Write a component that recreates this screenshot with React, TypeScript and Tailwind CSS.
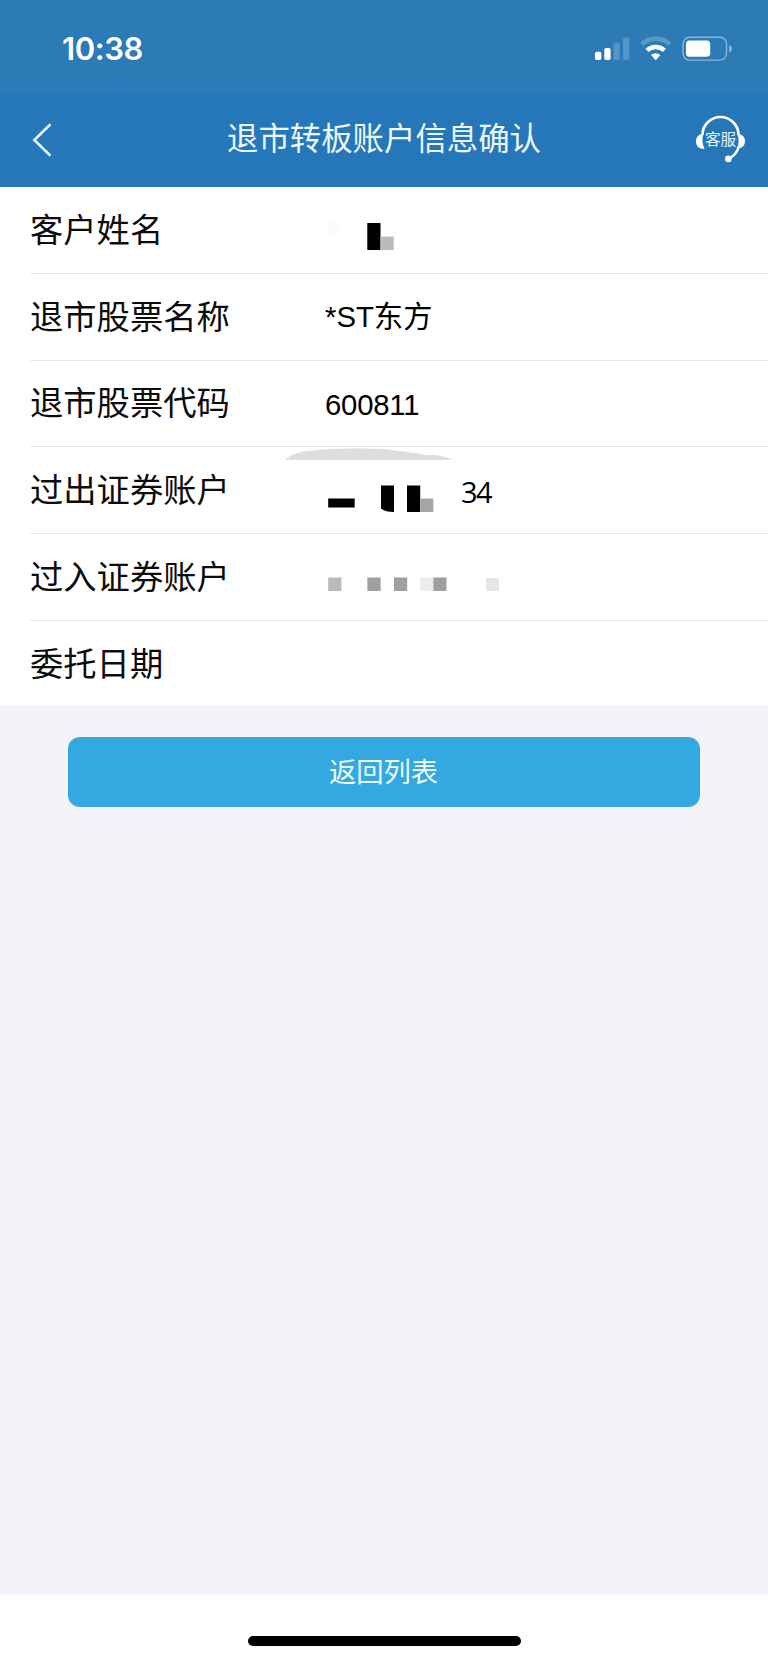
import type { ReactNode } from "react";

function StatusBar() {
  return (
    <div className="flex h-[93px] items-start justify-between bg-[#2c7bb7] pt-[31px] pr-[32px] pl-[62px] text-white">
      <span className="font-['Inter',sans-serif] text-[31px] leading-[36px] font-semibold tracking-[-0.4px]">
        10:38
      </span>
      <svg className="mt-px" width="146" height="32" viewBox="590 32 146 32" fill="white">
        {/* signal */}
        <rect x="595" y="51.7" width="6.3" height="8.3" rx="1.8" />
        <rect x="604.3" y="48" width="6.3" height="12" rx="1.8" />
        <rect x="613.6" y="43" width="6.2" height="17" rx="1.8" opacity="0.2" />
        <rect x="623" y="37.4" width="6.2" height="22.6" rx="1.8" opacity="0.2" />
        {/* wifi */}
        <path d="M641.7 44.2a20.3 20.3 0 0 1 28 0" fill="none" stroke="white" strokeWidth="4.6" opacity="0.22" />
        <path d="M647 50.4a12.7 12.7 0 0 1 17.4 0" fill="none" stroke="white" strokeWidth="4.4" />
        <path d="M651 54.9a7.2 7.2 0 0 1 9.4 0l-4.1 4.8q-.6.6-1.2 0z" />
        {/* battery */}
        <rect x="683.1" y="37.3" width="43.4" height="22.8" rx="6.5" fill="none" stroke="white" strokeWidth="1.4" opacity="0.45" />
        <rect x="686" y="40.6" width="24.2" height="16.2" rx="3.6" />
        <path d="M729 45.2q3 1 3 3.6t-3 3.6z" opacity="0.45" />
      </svg>
    </div>
  );
}

function NavBar() {
  return (
    <header className="flex h-[94px] items-center justify-between bg-[#2577b9] pr-[21px] pl-[31px] text-white">
      <svg width="22" height="36" viewBox="0 0 22 36" fill="none" stroke="#e6f3fa" strokeWidth="2.6">
        <path d="M19.5 2.3 3.3 18l16.2 15.8" />
      </svg>
      <h1 className="ml-[20px] text-[31.4px] leading-[46px] text-[#eef8fb]">退市转板账户信息确认</h1>
      <svg width="52" height="50" viewBox="695 115 52 50" fill="white">
        <path d="M702.5 135a18 18 0 0 1 36 0" fill="none" stroke="white" strokeWidth="2.7" />
        <path d="M704.6 148.8c-5.2.8-8.6-2.6-8.6-7.3s2.6-7.6 7.2-7.6c-1.3 4.8-1 10.2 1.4 14.9z" />
        <path d="M737.4 133.9c4.8 0 7.6 3 7.6 7.4s-3.4 7.4-7.9 7.2c2-4.7 2-10 .3-14.6z" />
        <path d="M738.8 146.5c-1.5 5.5-5 9.5-9.5 12.2" fill="none" stroke="white" strokeWidth="2.6" />
        <circle cx="728.4" cy="158.9" r="3.3" />
        <text x="705" y="145.3" fontSize="15.6" fill="#e6f3fa">客服</text>
      </svg>
    </header>
  );
}

function Row({ label, children }: { label: string; children?: ReactNode }) {
  return (
    <li className="ml-[30px] flex h-[86.8px] items-center border-b border-[#e6e6e6] last:border-b-0">
      <span className="mt-[2px] w-[295px] shrink-0 text-[33.3px] leading-[48px] text-[#0c0c0c]">{label}</span>
      {children}
    </li>
  );
}

// pixelated cover over private values
function Mosaic({ children }: { children: ReactNode }) {
  return (
    <svg className="-ml-[40px] shrink-0" width="176" height="86" viewBox="0 0 176 86">
      {children}
    </svg>
  );
}

export default function App() {
  return (
    <div className="flex h-[1663px] w-[768px] flex-col bg-[#f3f3f8] font-['Liberation_Sans','Noto_Sans_CJK_SC',sans-serif]">
      <StatusBar />
      <NavBar />
      <ul className="h-[520px] border-b border-[#ececee] bg-white">
        <Row label="客户姓名">
          <Mosaic>
            <rect x="43" y="35" width="13" height="13" rx="5" fill="#fafafa" />
            <rect x="82.3" y="36" width="13.2" height="27" fill="#000" />
            <rect x="95.5" y="49.5" width="13.2" height="13.5" fill="#b9bbba" />
          </Mosaic>
        </Row>
        <Row label="退市股票名称">
          <span className="text-[29.3px] leading-[42px]">*ST东方</span>
        </Row>
        <Row label="退市股票代码">
          <span className="mt-[3px] text-[29.3px] leading-[42px] tracking-[-0.2px]">600811</span>
        </Row>
        <Row label="过出证券账户">
          <Mosaic>
            <path d="M0 13C5 8 12 5.5 22 4 45 1 85 1 103 2.500 120 4.500 130 6 142 8 153 7.500 160 9 167 13z" fill="#dedede" />
            <rect x="43.2" y="51.5" width="26.5" height="9" fill="#000" />
            <path d="M96 38.5h13v26.5c-6 0-10-1-13-3.5z" fill="#000" />
            <rect x="122" y="38.5" width="13.2" height="26.5" fill="#000" />
            <rect x="135.2" y="51.5" width="13.2" height="13.5" fill="#a6a6a6" />
          </Mosaic>
          <span className="mt-[3px] font-['Open_Sans',sans-serif] text-[29px] leading-[42px] tracking-[-1.5px]">34</span>
        </Row>
        <Row label="过入证券账户">
          <Mosaic>
            <rect x="43.2" y="43.5" width="13.2" height="13.5" fill="#b9b9b9" />
            <rect x="82.4" y="43.5" width="13.2" height="13.5" fill="#9f9f9f" />
            <rect x="109" y="43.5" width="13.2" height="13.5" fill="#9f9f9f" />
            <rect x="135.2" y="43.5" width="13.2" height="13.5" fill="#ececec" />
            <rect x="148.3" y="43.5" width="13.2" height="13.5" fill="#9f9f9f" />
          </Mosaic>
          <span className="mt-[15px] ml-[24.7px] size-[13.3px] bg-[#e6e6e6]" />
        </Row>
        <Row label="委托日期" />
      </ul>
      <main className="grow px-[68px] pt-[30px]">
        <button className="block h-[70px] w-[632px] rounded-[12px] bg-[#34a8e0] pt-[2px] pr-px text-[27.3px] leading-[40px] text-[#eef9fb]">
          返回列表
        </button>
      </main>
      {/* home indicator */}
      <footer className="flex h-[68px] justify-center bg-white pt-[41px]">
        <div className="h-[10px] w-[273px] rounded-full bg-black" />
      </footer>
    </div>
  );
}
